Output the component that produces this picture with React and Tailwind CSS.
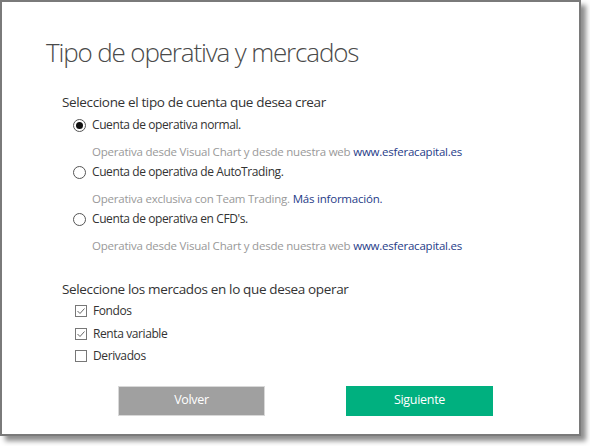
import React, { useState } from 'react';

const link = 'text-[#1f3c88]';

function Radio({ checked }) {
  return (
    <span className="w-[13px] h-[13px] rounded-full border border-[#555] flex items-center justify-center bg-white shrink-0">
      {checked && <span className="w-[7px] h-[7px] rounded-full bg-[#111]" />}
    </span>
  );
}

function Check({ checked }) {
  return (
    <span className="w-[12px] h-[12px] border border-[#777] flex items-center justify-center bg-white shrink-0">
      {checked && (
        <svg width="10" height="10" viewBox="0 0 10 10">
          <path d="M1.5 5 L4 7.5 L8.5 2.5" fill="none" stroke="#666" strokeWidth="1" />
        </svg>
      )}
    </span>
  );
}

export default function App() {
  const [tipo, setTipo] = useState(0);
  const [mercados, setMercados] = useState({ fondos: true, renta: true, derivados: false });

  const cuentas = [
    {
      label: 'Cuenta de operativa normal.',
      desc: (
        <>
          Operativa desde Visual Chart y desde nuestra web <span className={link}>www.esferacapital.es</span>
        </>
      ),
    },
    {
      label: 'Cuenta de operativa de AutoTrading.',
      desc: (
        <>
          Operativa exclusiva con Team Trading. <span className={link}>Más información.</span>
        </>
      ),
    },
    {
      label: "Cuenta de operativa en CFD's.",
      desc: (
        <>
          Operativa desde Visual Chart y desde nuestra web <span className={link}>www.esferacapital.es</span>
        </>
      ),
    },
  ];

  const lista = [
    ['fondos', 'Fondos'],
    ['renta', 'Renta variable'],
    ['derivados', 'Derivados'],
  ];

  return (
    <div className="w-[590px] h-[446px] bg-white" style={{ fontFamily: '"Open Sans", sans-serif' }}>
      <div className="w-[581px] h-[436px] border-2 border-[#7a7a7a] bg-white shadow-[5px_5px_5px_rgba(0,0,0,0.45)] flex flex-col">
        <h1 className="ml-[44px] mt-[32px] text-[26px] font-light leading-[36px] text-[#4a4a4a] tracking-[-1.15px]">
          Tipo de operativa y mercados
        </h1>

        <div className="ml-[60px] mt-[22px] text-[13.5px] leading-[20px] text-[#333] tracking-[-0.35px]">
          Seleccione el tipo de cuenta que desea crear
        </div>
        <div className="ml-[71px] mt-[2px] flex flex-col">
          {cuentas.map((c, i) => (
            <div key={i} className="flex flex-col">
              <button className="flex items-center gap-[6px] h-[22px] text-left" onClick={() => setTipo(i)}>
                <Radio checked={tipo === i} />
                <span className="text-[12px] text-[#333] tracking-[-0.4px]">{c.label}</span>
              </button>
              <div className="ml-[19px] mt-[8px] mb-[1px] h-[16px] leading-[16px] text-[11.5px] text-[#999] tracking-[-0.22px]">
                {c.desc}
              </div>
            </div>
          ))}
        </div>

        <div className="ml-[60px] mt-[24px] text-[13.5px] leading-[20px] text-[#333] tracking-[-0.35px]">
          Seleccione los mercados en lo que desea operar
        </div>
        <div className="ml-[73px] mt-[1px] flex flex-col">
          {lista.map(([k, l]) => (
            <button
              key={k}
              className="flex items-center gap-[6px] h-[22.5px] text-left"
              onClick={() => setMercados({ ...mercados, [k]: !mercados[k] })}
            >
              <Check checked={mercados[k]} />
              <span className="text-[12px] text-[#333] tracking-[-0.4px]">{l}</span>
            </button>
          ))}
        </div>

        <div className="mt-[18px] ml-[116px] flex gap-[81px]">
          <button className="w-[147px] h-[30px] bg-[#a0a0a0] text-white text-[12.5px] border border-[#d8d8d8] tracking-[-0.3px]">
            Volver
          </button>
          <button className="w-[147px] h-[30px] bg-[#00b07f] text-white text-[12.5px] tracking-[-0.3px]">Siguiente</button>
        </div>
      </div>
    </div>
  );
}
